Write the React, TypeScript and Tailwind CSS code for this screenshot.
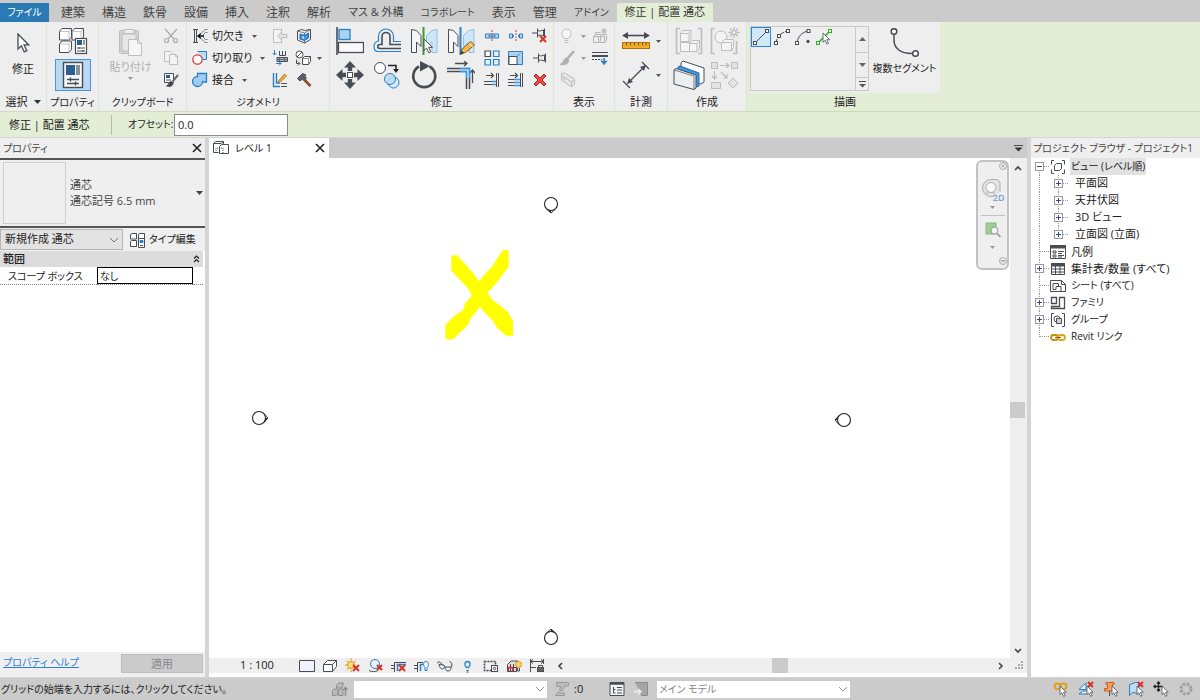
import type { ReactNode } from 'react'

const INK = '#474c55'
const BLUE = '#2b7fc4'
const PALE = '#bcdcf3'
const OFF = '#bdbdbd'
const RED = '#d8322a'

type IconProps = { w?: number; h?: number; color?: string; sw?: number; children: ReactNode }

function Icon({ w = 16, h = w, color = INK, sw = 1, children }: IconProps) {
  return (
    <svg
      width={w}
      height={h}
      viewBox={`0 0 ${w} ${h}`}
      fill="none"
      stroke={color}
      strokeWidth={sw}
      className="shrink-0"
      aria-hidden="true"
    >
      {children}
    </svg>
  )
}

/* ── Shared glyphs ── */

function Caret({ color = '#555' }: { color?: string }) {
  return (
    <svg width="5" height="3" viewBox="0 0 5 3" className="shrink-0" aria-hidden="true">
      <path d="M0 0h5L2.5 3z" fill={color} />
    </svg>
  )
}

const Pointer = ({ x, y, k = 1 }: { x: number; y: number; k?: number }) => (
  <path
    transform={`translate(${x} ${y}) scale(${k})`}
    d="M0 0v11.5l2.6-2.4 2.2 4.7 2-1-2.1-4.4h3.6z"
    fill="#fff"
    stroke={INK}
    strokeWidth="1"
  />
)

const Cross = ({ x, y, s = 6 }: { x: number; y: number; s?: number }) => (
  <path d={`M${x} ${y}l${s} ${s}m0 ${-s}l${-s} ${s}`} stroke={RED} strokeWidth="2" />
)

const Close = () => (
  <Icon w={10} color="#222" sw={1.6}><path d="M1 1l8 8M9 1l-8 8" /></Icon>
)

const Chevron = ({ d = 'M1 1l4 4 4-4', color = '#777', w = 10, h = 6, sw = 1 }) => (
  <Icon w={w} h={h} color={color} sw={sw}><path d={d} /></Icon>
)

/* ── Ribbon icons ── */

const ModifyCursor = () => <Icon w={14} h={20}><Pointer x={2} y={1} k={1.3} /></Icon>

const TypeProps = () => (
  <Icon w={30} h={28}>
    <g fill="#fff">
      <path d="M1.5 4.5l2.5-3h9.500v8.500l-2.500 3h-9.500zM14 4.500l2.500-3h9v8.500l-2.500 3H14zM1.5 17l2.500-3h9.500v8.500l-2.500 3h-9.500z" />
      <path d="M1.500 4.500H11V13M14 4.500h9V13M11 4.500l2.500-3M23 4.500l2.500-3M1.500 17H11v8.500M11 17l2.500-3" stroke="#9a9ea5" strokeWidth=".6" />
      <rect x="17.5" y="11.5" width="11" height="15" strokeWidth="1.2" />
    </g>
    <path d="M19 13h5v5h-5z" fill="#2a5f96" stroke="none" />
    <path d="M25 13h2v5h-2z" fill="#999" stroke="none" />
    <path d="M19 21h8M19 24h8M21 20v2M25 23v2" />
  </Icon>
)

const PropSheet = () => (
  <Icon w={22} h={28}>
    <rect x="1.5" y="1.5" width="19" height="25" fill="#f6f7f8" strokeWidth="1.4" />
    <path d="M4 4h9v10H4z" fill="#2a5f96" stroke="none" />
    <path d="M14 4h4v10h-4z" fill="#8b9098" stroke="none" />
    <path d="M5 18.5h12M5 22.5h12M8.5 16.5v4M13.5 20.5v4" strokeWidth="1.4" />
  </Icon>
)

const Paste = () => (
  <Icon w={26} h={30} color={OFF}>
    <rect x="1.5" y="3.5" width="19" height="23" rx="1" fill="#d2d2d2" />
    <path d="M6 2.5h10v4H6z" fill="#eee" />
    <path d="M4 7h14v17H4z" fill="#e6e6e6" />
    <path d="M10.5 12.5h9l4 4v12h-13z" fill="#f6f6f6" />
    <path d="M19.5 12.5v4h4" />
  </Icon>
)

const Cut = () => (
  <Icon color="#aaa" sw={1.2}>
    <path d="M2 1l9 10M14 1L5 11" />
    <circle cx="3.5" cy="12.5" r="2" /><circle cx="12.5" cy="12.5" r="2" />
  </Icon>
)

const Copy = () => (
  <Icon color={OFF}>
    <path d="M1.5 1.5h6l2 2v8h-8z" fill="#f4f4f4" />
    <path d="M6.5 4.5h6l2 2v8h-8z" fill="#f4f4f4" />
    <path d="M12.5 4.5v2h2" />
  </Icon>
)

const MatchType = () => (
  <Icon>
    <path d="M1.5 1.5h9v9h-9z" fill="#fff" />
    <path d="M3 3h4v3H3z" fill="#2a5f96" stroke="none" />
    <path d="M3 8h5" />
    <path d="M15 3L9.5 9.5" stroke="#6b6b6b" strokeWidth="2" />
    <path d="M8.5 9.5c-3 0-2 3-5 4.5 3 1 6.5 0 6.5-2.5z" fill="#444" />
  </Icon>
)

const Cope = () => (
  <Icon>
    <path d="M1 1.5h5M1 14.5h5M2.5 2v12M4.5 2v12" />
    <path d="M15.5 1.5H13L9.5 5M15.5 14.5H13L9.5 11M15.5 4.5h-2L11.5 6.5v3l2 2h2" stroke="#747982" />
    <path d="M12 8H6.5M9 5.5L6 8l3 2.5" stroke="#111" strokeWidth="1.4" />
  </Icon>
)

const CutGeom = () => (
  <Icon>
    <path d="M5.5 1.5h9v8h-4" fill={PALE} stroke={BLUE} />
    <circle cx="5.5" cy="9.5" r="4.7" fill="#fff" stroke={RED} strokeWidth="1.2" />
  </Icon>
)

const JoinGeom = () => (
  <Icon color={BLUE}>
    <path d="M5.5 1.5h9V10H10.500a5 5 0 1 1-5-5.500z" fill="#9fcdef" strokeWidth="1.3" />
  </Icon>
)

const SplitFace = () => (
  <Icon color={OFF}>
    <path d="M9.5 4V1.5h-8v13h8V12" fill="#f4f4f4" />
    <path d="M15 6.5H9.5V4L5.5 8l4 4V9.5H15z" fill="#e4e4e4" />
  </Icon>
)

const PaintCube = () => (
  <Icon>
    <path d="M1.5 3l4-1.5 3 1 6-1v10l-6 3.5-7-3z" fill="#eef1f4" />
    <path d="M8.5 5v10M1.5 3l7 2 6-3.500" strokeWidth=".7" />
    <path d="M4 6l4.500 1.500L12.500 5v5L8.500 12.500 4 11z" fill="#3f94d6" stroke="#1d6bb0" />
    <path d="M6 8.500h2v2H6z" fill="#cfe6f7" stroke="none" />
  </Icon>
)

const BeamJoin = () => (
  <Icon>
    <path d="M2.5 0v5M.5 3l2 2 2-2M9 13.5H4M7 11.5l2 2-2 2" stroke={BLUE} />
    <path d="M7.5 1v4.5h6V1M10.5 1v4" />
    <path d="M5 7.5h10.5v4H5z" fill="#aeb3ba" />
    <path d="M5 9.5h10M7.5 8v3M12.5 8v3" strokeWidth=".7" />
  </Icon>
)

const WallJoin = () => (
  <Icon>
    <circle cx="4.5" cy="4.5" r="3.5" fill="#fff" /><path d="M2 7l5-5" />
    <path d="M1.5 9.5v4h3M3 11.5l2 2-2 2" />
    <path d="M7.5 8.5l2-2h6v5l-2 3h-6z" fill="#fff" /><path d="M7.5 8.5h6v6M13.5 8.5l2-2" strokeWidth=".6" />
  </Icon>
)

const Unjoin = () => (
  <Icon>
    <path d="M1.5 1v13.5H8M4.5 1v10H8" stroke={BLUE} strokeWidth="1.4" />
    <path d="M9 11.5h6M9 14.5h6" />
    <path d="M6 9.5L12.5 2l2 2L8 10.5z" fill="#f0b13c" stroke="#a5691b" strokeWidth=".8" />
  </Icon>
)

const Hammer = () => (
  <Icon>
    <path d="M7 6.5l7.5 7.5" stroke="#8a4b33" strokeWidth="2.6" />
    <path d="M1.5 6.5l5-5 3.5 1.5-1 1.5 1.5 1.5-2 2-1.5-1.5L4 9z" fill="#5a6069" />
  </Icon>
)

const Align = () => (
  <Icon w={28} h={28}>
    <path d="M1 0v28" strokeWidth="1.6" />
    <rect x="3" y="2.5" width="11" height="10" fill="#a9d3f0" stroke={BLUE} strokeWidth="1.3" />
    <rect x="2.5" y="15.5" width="25" height="10" fill="#fafafa" strokeWidth="1.3" />
  </Icon>
)

const Offset = () => (
  <Icon w={28} h={26}>
    <path d="M28 13.5h-7.5v-5a7.500 7.500 0 0 0-15 0v4.500C2 13.5 1 15 1 18.5s1 5 4 5h23" fill="#e4f1fa" stroke={BLUE} strokeWidth="1.2" />
    <path d="M28 16.5H17v-8a4 4 0 0 0-8 0v8H7c-3 0-3 4 0 4h21" fill="#eee" strokeWidth="1.6" />
  </Icon>
)

const MirrorHalf = ({ blue = false }) => (
  <path
    d={blue ? 'M16.5 8.5L22 3.5l5-1v23h-5V15l-5.5 4.5z' : 'M1.5 2.5l5 1 4.5 5v11L6.5 15v10.5h-5z'}
    fill={blue ? '#cfe6f6' : '#f6f6f6'}
    stroke={blue ? '#8dbfe4' : INK}
  />
)

const MirrorPick = () => (
  <Icon w={28} h={28}>
    <MirrorHalf /><MirrorHalf blue />
    <path d="M13.5 0v28" stroke="#3e9a35" strokeWidth="2" />
    <Pointer x={14} y={12} />
  </Icon>
)

const MirrorDraw = () => (
  <Icon w={28} h={28}>
    <MirrorHalf /><MirrorHalf blue />
    <path d="M13.5 0v28" stroke={BLUE} strokeWidth="2" />
    <path d="M13.5 27l1.5-5 9-7.5 3.5 3.5-9 7.5z" fill="#f3bb45" stroke="#8a5a20" />
    <path d="M22 16l3.5 3.5" stroke="#fff" /><path d="M13.5 27l1-3 2 2z" fill="#222" />
  </Icon>
)

const Move = () => (
  <Icon w={28} h={28}>
    <path
      d="M14 0l6 6.5h-3.8V10h-4.4V6.5H8zM14 28l-6-6.5h3.8V18h4.4v3.5H20zM0 14l6.5-6v3.8H10v4.4H6.5V20zM28 14l-6.5 6v-3.8H18v-4.4h3.5V8z"
      fill={INK}
      stroke="none"
    />
    <rect x="11.5" y="11.5" width="5" height="5" fill="#fff" />
  </Icon>
)

const CopyObj = () => (
  <Icon w={28} h={28}>
    <circle cx="7" cy="7" r="5.5" fill="#fff" />
    <path d="M15 4.5h8v5" stroke="#222" strokeWidth="1.5" /><path d="M20 8h6l-3 4z" fill="#222" stroke="none" />
    <circle cx="20.5" cy="21.5" r="5.5" fill="#d8ebf8" stroke={BLUE} />
    <circle cx="17" cy="18" r="5.5" fill={PALE} fillOpacity=".8" stroke={BLUE} />
  </Icon>
)

const Rotate = () => (
  <Icon w={28} h={28}>
    <path d="M9 5.5a11 11 0 1 0 10.5 0" strokeWidth="2.6" />
    <path d="M10 0l10 5-10 5.5z" fill={INK} stroke="none" />
  </Icon>
)

const TrimCorner = () => (
  <Icon w={28} h={28}>
    <path d="M8 2.5h12M17 0l3 2.5L17 5M25.5 22V9M23 12l2.5-3 2.5 3" strokeWidth="1.3" />
    <path d="M0 7.5h13M0 10.5h13M19.5 17v11M22.5 17v11" strokeWidth="1.5" />
    <path d="M13 7.5h9.5V17M13 10.5h6.5V17" stroke="#3f97e0" strokeWidth="1.8" />
  </Icon>
)

const Split = ({ gap = false }) => (
  <Icon>
    <path d={gap ? 'M1.5 6h3v4h-3zM11.5 6h3v4h-3z' : 'M1.5 6h13v4h-13z'} fill={PALE} stroke={BLUE} />
    <path d="M8 2v12" stroke={RED} strokeDasharray="2 1" />
    <path d="M5 8h6" stroke={gap ? '#eee' : BLUE} />
    <path d="M4 8l2-1.5v3zM12 8l-2-1.5v3z" fill={BLUE} stroke="none" />
  </Icon>
)

const Pin = () => (
  <path d="M1 8h5M6.5 3.5v9M6.5 5.5c3 1 3.5 0 6-.5v6c-2.5-.5-3-1.5-6-.5M13.5 3.5v9" />
)

const Unpin = () => <Icon><g transform="translate(-1 -3)"><Pin /></g><Cross x={8} y={8} /></Icon>

const ArrayGrid = () => (
  <Icon sw={1.2}>
    <path d="M1 1h5.5v5.5H1z" fill="#fff" />
    <path d="M9.5 1H15v5.5H9.5zM9.5 9.5H15V15H9.5zM1 9.5h5.5V15H1z" fill="#e4f1fb" stroke={BLUE} />
  </Icon>
)

const Scale = () => (
  <Icon>
    <path d="M.5 1.5h14v13H.5z" fill="#a9d3f0" stroke={BLUE} />
    <path d="M1 6.5h8v8H1z" fill="#fff" />
    <path d="M9 6.5l3-3" stroke={BLUE} />
  </Icon>
)

const Extend = ({ multi = false }) => (
  <Icon>
    <path d="M2 3.5h7M7 1l2.5 2.5L7 6" strokeWidth="1.2" />
    <path d={multi ? 'M0 7.5h6M0 10.5h6M0 13.5h6' : 'M0 9.5h8M0 12.5h8'} />
    <path d={multi ? 'M6 7.5h6M6 10.5h6M6 13.5h6' : 'M8 9.5h4M8 12.5h4'} stroke="#3f97e0" strokeWidth="1.4" />
    <path d="M12.5 1v14M14.5 1v14" />
  </Icon>
)

const Delete = () => (
  <Icon>
    <path d="M2 4l2-2 4 4 4-4 2 2-4 4 4 4-2 2-4-4-4 4-2-2 4-4z" fill="#ea4b43" stroke="#b3231e" />
  </Icon>
)

const Bulb = () => (
  <Icon color={OFF}>
    <path d="M5.5 10.5C4 8.5 3 7.5 3 5.5a4.5 4.5 0 0 1 9 0c0 2-1 3-2.5 5zM5.5 12.5h4M6 14.5h3" fill="#f6f6f6" />
  </Icon>
)

const DispBoxes = () => (
  <Icon color="#b4b4b4">
    <path d="M1.5 8.5l2-2h5v6l-1.5 2H1.5zM7.5 8.5l2-2h5v6l-1.5 2H7.5M3.5 6V4.5h5" fill="#eee" />
    <path d="M1.5 8.5h5v5M7.5 8.5h5v5" />
    <path d="M12 0v6M9 3h6M10 1l4 4M14 1l-4 4" />
  </Icon>
)

const Brush = () => (
  <Icon color="#b0b0b0">
    <path d="M15 1L8.5 8.5" strokeWidth="2.6" />
    <path d="M8 8c-4 0-2 4-7 6.5 5 .5 9 0 8.5-5z" fill="#b0b0b0" />
  </Icon>
)

const LineWork = () => (
  <Icon>
    <path d="M0 2.5h16" /><path d="M0 6h16" strokeWidth="2" /><path d="M0 9.5h10" strokeDasharray="2 1" />
    <path d="M12 8v6M10 11.5l2 2.5 2-2.5z" stroke={BLUE} fill={BLUE} strokeWidth="1.6" />
  </Icon>
)

const Beam = () => (
  <Icon color={OFF}>
    <path d="M1.5 1.5l3-.5 10 6v5l-3 3-10-7z" fill="#e6e6e6" /><path d="M1.5 3.5l10 6.5v4M11.5 10l3-2.5M4 8V5" />
  </Icon>
)

const Measure = () => (
  <Icon w={28} h={20}>
    <path d="M3 4.5h22" strokeWidth="1.6" />
    <path d="M0 4.5L6 1v7zM28 4.5L22 1v7z" fill={INK} stroke="none" />
    <rect x=".5" y="11.5" width="27" height="6" fill="#f2ae24" stroke="#a97414" />
    <path d="M4.5 12v2.5M8.5 12v2.5M12.5 12v2.5M16.5 12v2.5M20.5 12v2.5M24 12v2.5" stroke="#7b5210" />
  </Icon>
)

const Dimension = () => (
  <Icon w={28} h={28} sw={1.3}>
    <path d="M6 22L23 5M20 1l7 7M1 20l7 7" />
    <path d="M24 4l-2 6-4-4zM5 23l2-6 4 4z" fill={INK} stroke="none" />
  </Icon>
)

const CreateGroup = () => (
  <Icon w={28} h={28} color={OFF}>
    <path d="M5 1.5H1.5v25H5M23 1.5h3.5v25H23" strokeWidth="1.6" />
    <path d="M5.5 6.5L8 3.5h8V12l-2 2.5H5.5zM5.5 15.5h9v9h-9zM14.5 16.5l2.5-3h7.5v8l-2.5 3h-7.5z" fill="#f4f4f4" />
    <path d="M5.5 6.5H14v8M16 3.5l-2 3M14.5 16.5H22v8M24.5 13.5l-2.5 3" />
  </Icon>
)

const CreateSimilar = () => (
  <Icon w={30} h={28} color={OFF}>
    <path d="M5 1.5H1.5v25H5M23 26.5h3.5V14" strokeWidth="1.6" />
    <circle cx="11" cy="10" r="6" fill="#f4f4f4" />
    <path d="M11.5 15.5l3-3h9v8l-2 3h-10zM11.5 15.5h10v8" fill="#f4f4f4" />
    <path d="M24 0v11M18.5 5.5h11M20 1.5l8 8M28 1.5l-8 8" strokeWidth="1.3" />
    <circle cx="24" cy="5.5" r="2" fill="#eee" />
  </Icon>
)

const Assembly = () => (
  <Icon w={32} h={30}>
    <path d="M8 3l2-2 21 7v14l-3 2L8 17z" fill="#fff" />
    <path d="M5 7l2-1 19 7v13l-3 1L5 20z" fill="#3f97e0" stroke="#1e6eb4" />
    <path d="M1 10l2-1.5 20 6.5v13l-2 1.5L1 24z" fill="#eceef0" />
    <path d="M1 10l20 6v13" strokeWidth=".7" />
  </Icon>
)

const Parts = () => (
  <Icon w={30} h={28} color={OFF}>
    <path d="M1.5 1.5h6v6h-6zM21.5 1.5h6v6h-6zM1.5 21.5h9v6h-9zM18 22l5-5 5 5-5 5z" fill="#e3e3e3" />
    <path d="M10 4.5h9M16 2l3 2.5L16 7M4.5 10v8M2 15l2.5 3L7 15M11 11l6 6M17 13v4h-4" strokeWidth="1.2" />
  </Icon>
)

const dot = (x: number, y: number, c = INK) => (
  <rect x={x - 1.5} y={y - 1.5} width="3" height="3" fill="#fff" stroke={c} />
)

const DrawLine = () => <Icon><path d="M2 14L14 2" />{dot(2, 14)}{dot(14, 2)}</Icon>
const DrawArc = () => (
  <Icon><path d="M2 14c.5-5.500 5-11 12-12" strokeDasharray="4 1" />{dot(2, 14)}{dot(5, 7)}{dot(14, 2)}</Icon>
)
const DrawCenterArc = () => (
  <Icon><path d="M2 14c.5-6 5-11 11-12" />{dot(2, 14)}{dot(13.5, 2)}<circle cx="13" cy="12.5" r="1.2" fill={INK} /></Icon>
)
const DrawPick = () => (
  <Icon><path d="M2 14L14 2" stroke="#25b81f" strokeWidth="1.6" />{dot(2, 14, '#25b81f')}{dot(14, 2, '#25b81f')}<Pointer x={7} y={4} k={0.8} /></Icon>
)

const MultiSegment = () => (
  <Icon w={30} h={30} sw={1.5}>
    <path d="M4 6v6c0 8 6 13.5 18 13.5" />
    <circle cx="4" cy="3.5" r="2.8" fill="#fff" /><circle cx="25.5" cy="25.5" r="2.8" fill="#fff" />
  </Icon>
)

/* ── Ribbon ── */

const TABS = ['建築', '構造', '鉄骨', '設備', '挿入', '注釈', '解析', 'マス & 外構', 'コラボレート', '表示', '管理', 'アドイン']

const isWide = (text: string) => /^([\u30a0-\u30ff]{3}|Revit)/.test(text)

const tabSize = (text: string) => {
  if (isWide(text)) return 'text-[10px]'
  return text.includes('&') ? 'text-[11px]' : 'text-[12px]'
}

function Panel({ title, width, children, menu }: { title: string; width: string; children: ReactNode; menu?: boolean }) {
  return (
    <section className={`${width} flex shrink-0 flex-col border-r border-[#dbe8c9] bg-[#eeeeee]`}>
      <div className="flex h-[71px] items-start justify-center pt-[3px]">{children}</div>
      <h2 className={`flex h-[18px] items-center justify-center gap-1.5 whitespace-nowrap ${isWide(title) ? 'text-[10px]' : 'text-[11px]'}`}>
        {title}
        {menu && <svg width="7" height="4" viewBox="0 0 7 4" aria-hidden="true"><path d="M0 0h7L3.5 4z" fill="#333" /></svg>}
      </h2>
    </section>
  )
}

function Tool({ label, children, className = 'h-[22px] w-6' }: { label: string; children: ReactNode; className?: string }) {
  return (
    <button type="button" aria-label={label} className={`${className} flex shrink-0 items-center justify-center gap-1.5`}>
      {children}
    </button>
  )
}

function TextTool({ icon, text }: { icon: ReactNode; text: string }) {
  return (
    <button type="button" className="flex h-[22px] items-center gap-1 whitespace-nowrap text-[11px]">
      {icon}
      <span>{text}</span>
      <span className="pl-1"><Caret /></span>
    </button>
  )
}

function Ribbon() {
  return (
    <header>
      <nav className="flex h-[22px] items-end bg-[#cbcbcb]">
        <button type="button" className="h-[19px] w-[49px] shrink-0 bg-[#2a7ab5] text-[10px] text-white">ファイル</button>
        <div className="flex h-[19px] shrink-0 items-center gap-[17px] pl-3">
          {TABS.map(tab => (
            <button key={tab} type="button" className={`whitespace-nowrap text-[#444] ${tabSize(tab)}`}>{tab}</button>
          ))}
        </div>
        <button type="button" className="ml-2 h-[19px] w-24 shrink-0 whitespace-nowrap bg-[#e4eed6] text-[11px] text-[#333]">
          修正 | 配置 通芯
        </button>
      </nav>

      <div className="flex h-[90px] overflow-hidden border-b border-[#cfdcbc] bg-[#e4eed6]">
        <Panel title="選択" width="w-[47px]" menu>
          <button type="button" className="flex flex-col items-center gap-2 pt-2 text-[11px] leading-4">
            <ModifyCursor />
            修正
          </button>
        </Panel>

        <Panel title="プロパティ" width="w-[52px]">
          <div className="flex flex-col items-center">
            <Tool label="タイプ プロパティ" className="h-8 w-9"><TypeProps /></Tool>
            <Tool label="プロパティ" className="mt-0.5 h-8 w-9 border border-[#4a93d6] bg-[#b9d8f2]"><PropSheet /></Tool>
          </div>
        </Panel>

        <Panel title="クリップボード" width="w-[88px]">
          <button type="button" disabled className="flex w-14 flex-col items-center whitespace-nowrap pt-0.5 text-[11px] leading-5 text-[#b0b0b0]">
            <Paste />
            <span>貼り付け</span>
            <Caret color="#999" />
          </button>
          <div className="flex flex-col">
            <Tool label="切り取り"><Cut /></Tool>
            <Tool label="コピー"><Copy /></Tool>
            <Tool label="タイプの一致"><MatchType /></Tool>
          </div>
        </Panel>

        <Panel title="ジオメトリ" width="w-[143px]">
          <div className="flex w-[76px] flex-col items-start">
            <TextTool icon={<Cope />} text="切欠き" />
            <TextTool icon={<CutGeom />} text="切り取り" />
            <TextTool icon={<JoinGeom />} text="接合" />
          </div>
          <div className="flex flex-col">
            <Tool label="面を分割"><SplitFace /></Tool>
            <Tool label="梁結合"><BeamJoin /></Tool>
            <Tool label="結合解除"><Unjoin /></Tool>
          </div>
          <div className="flex flex-col items-start">
            <Tool label="ペイント"><PaintCube /></Tool>
            <Tool label="壁結合" className="h-[22px] w-8"><WallJoin /><Caret /></Tool>
            <Tool label="取り壊し"><Hammer /></Tool>
          </div>
        </Panel>

        <Panel title="修正" width="w-[224px]">
          <div className="grid grid-cols-[repeat(4,37px)] grid-rows-[34px_34px] justify-items-center">
            <Tool label="位置合わせ" className="size-8"><Align /></Tool>
            <Tool label="オフセット" className="size-8"><Offset /></Tool>
            <Tool label="鏡像化 - 軸を選択" className="size-8"><MirrorPick /></Tool>
            <Tool label="鏡像化 - 軸を描画" className="size-8"><MirrorDraw /></Tool>
            <Tool label="移動" className="size-8"><Move /></Tool>
            <Tool label="複写" className="size-8"><CopyObj /></Tool>
            <Tool label="回転" className="size-8"><Rotate /></Tool>
            <Tool label="コーナーへトリム" className="size-8"><TrimCorner /></Tool>
          </div>
          <div className="grid grid-cols-3">
            <Tool label="要素を分割"><Split /></Tool>
            <Tool label="隙間で分割"><Split gap /></Tool>
            <Tool label="ピン解除"><Unpin /></Tool>
            <Tool label="配列複写"><ArrayGrid /></Tool>
            <Tool label="尺度変更"><Scale /></Tool>
            <Tool label="ピン"><Icon><Pin /></Icon></Tool>
            <Tool label="単一トリム"><Extend /></Tool>
            <Tool label="複数トリム"><Extend multi /></Tool>
            <Tool label="削除"><Delete /></Tool>
          </div>
        </Panel>

        <Panel title="表示" width="w-[61px]">
          <div className="flex flex-col">
            <Tool label="非表示" className="h-[22px] w-8"><Bulb /><Caret color="#999" /></Tool>
            <Tool label="グラフィックスを上書き" className="h-[22px] w-8"><Brush /><Caret color="#999" /></Tool>
            <Tool label="切断面"><Beam /></Tool>
          </div>
          <div className="flex flex-col">
            <Tool label="要素を置換"><DispBoxes /></Tool>
            <Tool label="ラインワーク"><LineWork /></Tool>
          </div>
        </Panel>

        <Panel title="計測" width="w-[53px]">
          <div className="flex flex-col">
            <Tool label="計測" className="h-8 w-11"><Measure /><Caret /></Tool>
            <Tool label="寸法" className="h-9 w-11"><Dimension /><Caret /></Tool>
          </div>
        </Panel>

        <Panel title="作成" width="w-[79px]">
          <div className="grid grid-cols-2 grid-rows-[34px_34px]">
            <Tool label="グループを作成" className="h-8 w-9"><CreateGroup /></Tool>
            <Tool label="類似を作成" className="h-8 w-9"><CreateSimilar /></Tool>
            <Tool label="アセンブリを作成" className="h-8 w-9"><Assembly /></Tool>
            <Tool label="パーツを作成" className="h-8 w-9"><Parts /></Tool>
          </div>
        </Panel>

        <section className="ml-[3px] flex w-[190px] shrink-0 flex-col">
          <div className="flex h-[71px] items-start bg-[#eeeeee] pt-1">
            <div className="flex h-[65px] w-[119px] border border-[#c9c9c9]">
              <div className="flex flex-1 items-start">
                <Tool label="線分" className="size-5 border border-[#2b86d8] bg-[#cfe8fa]"><DrawLine /></Tool>
                <Tool label="始点、終点、円弧" className="h-5 w-[21px]"><DrawArc /></Tool>
                <Tool label="中心、両端指定による円弧" className="h-5 w-[21px]"><DrawCenterArc /></Tool>
                <Tool label="選択" className="h-5 w-[21px]"><DrawPick /></Tool>
              </div>
              <div className="flex w-[13px] flex-col divide-y divide-[#c9c9c9] border-l border-[#c9c9c9]">
                <button type="button" aria-label="上へ" className="flex flex-1 items-center justify-center"><Icon w={7} h={4}><path d="M0 4h7L3.5 0z" fill="#666" stroke="none" /></Icon></button>
                <button type="button" aria-label="下へ" className="flex flex-1 items-center justify-center"><Icon w={7} h={4}><path d="M0 0h7L3.5 4z" fill="#666" stroke="none" /></Icon></button>
                <button type="button" aria-label="展開" className="flex h-3 items-center justify-center"><Icon w={7} h={7}><path d="M0 .5h7" /><path d="M0 3h7L3.5 6.5z" fill="#555" stroke="none" /></Icon></button>
              </div>
            </div>
            <button type="button" className="flex flex-1 flex-col items-center gap-0.5 whitespace-nowrap pt-0.5 text-[10px] leading-4">
              <MultiSegment />
              複数セグメント
            </button>
          </div>
          <h2 className="flex h-[18px] items-center justify-center text-[11px]">描画</h2>
        </section>
      </div>

      <div className="flex h-[25px] items-center bg-[#e4eed6]">
        <span className="w-[112px] shrink-0 whitespace-nowrap border-r border-[#b5bda9] pl-[9px] text-[11px] leading-5">修正 | 配置 通芯</span>
        <label htmlFor="offset" className="w-[62px] pl-4 text-[10px]">オフセット:</label>
        <input id="offset" defaultValue="0.0" className="h-[22px] w-[114px] border border-[#8b8b8b] bg-white px-[3px] text-[11px]" />
      </div>
    </header>
  )
}

/* ── Properties palette ── */

function PropertiesPalette() {
  return (
    <aside className="flex w-[205px] shrink-0 flex-col bg-[#efefef]">
      <div className="flex h-5 items-center justify-between px-[3px]">
        <h2 className="text-[10px] text-[#444]">プロパティ</h2>
        <button type="button" aria-label="閉じる"><Close /></button>
      </div>
      <button type="button" className="flex h-[70px] items-center border-y-2 border-[#555] pl-[3px] pr-0.5 text-left text-[#444]">
        <span className="h-[62px] w-[63px] border border-[#cfcfcf]" />
        <span className="flex-1 pl-1 text-[11px] leading-4">通芯<br />通芯記号 6.5 mm</span>
        <Icon w={7} h={4}><path d="M0 0h7L3.5 4z" fill="#444" stroke="none" /></Icon>
      </button>
      <div className="flex h-[23px] items-center">
        <div className="grid w-[123px] items-center">
          <select aria-label="要素フィルタ" className="col-start-1 row-start-1 h-[21px] appearance-none border border-[#b5b5b5] bg-[#e3e3e3] pl-1 text-[11px]">
            <option>新規作成 通芯</option>
          </select>
          <span className="pointer-events-none col-start-1 row-start-1 justify-self-end pr-1"><Chevron /></span>
        </div>
        <button type="button" className="flex items-center gap-1 whitespace-nowrap pl-1.5 text-[10px]">
          <Icon>
            <path d="M1.5 3l1-1.5h5V7h-6zM9.5 3l1-1.5h5V7h-6zM1.5 9.5l1-1h5v6h-6z" fill="#fff" />
            <path d="M9.5 6.5h6v9h-6z" fill="#fff" /><path d="M11 8.5h3v2h-3z" fill={BLUE} stroke={BLUE} /><path d="M11 13.5h3" />
          </Icon>
          タイプ編集
        </button>
      </div>
      <div className="flex-1 bg-white pr-0.5">
        <table className="w-full table-fixed border-collapse text-[10px] leading-4">
          <colgroup><col className="w-[97px]" /><col /><col className="w-2.5" /></colgroup>
          <tbody>
            <tr className="h-4 bg-[#dcdcdc]">
              <th colSpan={2} className="p-0 pl-[3px] text-left text-[11px] font-medium">範囲</th>
              <td className="p-0"><Icon w={7} h={8} color="#222" sw={1.2}><path d="M1 3.5L3.5 1 6 3.5M1 7l2.5-2.5L6 7" /></Icon></td>
            </tr>
            <tr className="h-[17px] border-b border-dotted border-[#888]">
              <td className="p-0 pl-2"><label htmlFor="scope">スコープ ボックス</label></td>
              <td className="p-0">
                <input id="scope" defaultValue="なし" className="block h-[17px] w-full border border-black bg-white px-0.5" />
              </td>
              <td className="p-0" />
            </tr>
          </tbody>
        </table>
      </div>
      <div className="flex h-[25px] items-start justify-between pl-[3px] pr-0.5 pt-0.5">
        <a href="#help" className="text-[10px] leading-4 text-[#2f7fd6] underline">プロパティ ヘルプ</a>
        <button type="button" disabled className="h-[19px] w-[82px] border border-[#bdbdbd] bg-[#cbcbcb] text-[11px] leading-4 text-[#888]">適用</button>
      </div>
    </aside>
  )
}

/* ── Drawing view ── */

function ElevationMark({ x, y, turn }: { x: number; y: number; turn: number }) {
  return (
    <g transform={`translate(${x} ${y}) rotate(${turn})`} stroke="#222" fill="none">
      <path d="M-4.5 5L0 9l4.5-4" fill="#fff" strokeWidth=".9" />
      <path d="M-4.5 5L0 9V6z" fill="#222" stroke="none" />
      <circle r="6.5" fill="#fff" strokeWidth="1.1" />
    </g>
  )
}

const VIEW_TOOLS: { name: string; art: ReactNode }[] = [
  { name: '詳細レベル', art: <path d="M.5 2.5h15v11H.5z" fill="#f0f4fa" /> },
  { name: '表示スタイル', art: <path d="M1.5 6.5l4-4h9v6l-4 5h-9zM1.5 6.5h9v7M10.5 6.5l4-4" fill="#fff" /> },
  { name: '太陽', art: <><circle cx="6" cy="7" r="3.5" fill="#ffdf6b" stroke="#d9940f" /><path d="M6 0v2.5M0 7h2M1.5 2.5l2 2M1.5 12l2-2M6 12v2M10.5 2.5L9 4.5" stroke="#d9940f" /><Cross x={8} y={7} /></> },
  { name: '影', art: <><circle cx="7" cy="6" r="4.5" fill="#e4f2fc" stroke={BLUE} /><path d="M1 12.5c3 1.5 6 1.5 9 0" /><Cross x={9} y={7} s={5} /></> },
  { name: 'トリミング', art: <><path d="M3.5 14V4.5H15M0 7.5h4M0 10.5h4" /><path d="M6.5 13V6.5H15" stroke={BLUE} strokeWidth="1.5" /><Cross x={8} y={7} /></> },
  { name: 'トリミング領域', art: <><path d="M3.5 14V4.5H9M0 7.5h4M0 10.5h4" /><path d="M6.5 13V6.5H10" stroke={BLUE} strokeWidth="1.5" /><path d="M11 9.5c-2-2-2-6 1-6s3 4 1 6v3h-2z" fill="#fff" stroke={BLUE} /></> },
  { name: '一時的な非表示', art: <><path d="M1 5.5C0 3 3 3 5 6.5M14.5 9c1-3 0-5-2-5.5" /><path d="M2 6.5l5 .5c1 2 0 4-1.5 4S2 9 2 6.5zM8 9h6c.5 2-1 4-3 4S8 11 8 9z" fill="#e8f2fa" /></> },
  { name: '非表示要素', art: <><path d="M6.5 9.5c-2.5-2.5-2-6 1-6s3.5 3.5 1 6z" fill="#e4f2fc" stroke={BLUE} strokeWidth="1.3" /><path d="M6.5 12.5h2M6.5 14h2" /></> },
  { name: 'ビュー プロパティ', art: <><path d="M1.5 3.5h11v9h-11z" strokeDasharray="2 1" strokeWidth="1.6" /><rect x="8.5" y="7.5" width="6" height="6" fill="#fff" /><circle cx="11.5" cy="10.5" r="1.2" /></> },
  { name: '解析モデル', art: <><path d="M1.5 6.5L5 3h7l-1.5 3.5v7h-9zM4.5 6v7M7.5 6v7M1.5 9.5h10" fill="#ddd" /><path d="M2.5 13V9.5h4V13" stroke={RED} strokeWidth="1.3" /><circle cx="12.5" cy="6.5" r="3" fill="#ffd36b" stroke="#d9940f" /><path d="M11.5 10v3h2v-3" /></> },
  { name: '拘束', art: <><path d="M1.5 1v13M14.5 1v5M2 3.5h12M2 9.5h5" /><path d="M4 1.5l-2.5 2L4 5.5M12 1.5l2.5 2-2.5 2" /><rect x="8.5" y="9.5" width="6" height="4" fill="#666" /><path d="M9.5 9.5v-2h4v2" /></> },
]

function NavigationBar() {
  return (
    <div className="absolute right-px top-0.5 flex h-[110px] w-[33px] flex-col items-center rounded-md border-2 border-[#c2c2c2] bg-[#efefef]">
      <button type="button" aria-label="ナビゲーションを閉じる" className="self-end"><Icon w={8} color="#aaa"><circle cx="4" cy="4" r="3.5" /><path d="M2.5 2.5l3 3M5.5 2.5l-3 3" /></Icon></button>
      <button type="button" aria-label="2D ホイール" className="grid pt-2">
        <span className="col-start-1 row-start-1">
          <Icon w={24} h={24} color="#adadad">
            <path d="M19 14V5.5c0-2.5-2-4-4-4h-5a8.5 8.5 0 1 0 0 17h3" fill="#e4e4e4" />
            <circle cx="10" cy="9.5" r="5" fill="#f8f8f8" /><path d="M5 16l3-2.5M12 14l2 2.5" />
          </Icon>
        </span>
        <span className="col-start-1 row-start-1 self-end justify-self-end text-[9px] font-semibold leading-[9px] text-[#7b9fc6]">2D</span>
      </button>
      <span className="pb-1.5 pt-1"><Caret color="#999" /></span>
      <span className="w-6 border-t border-[#c2c2c2]" />
      <button type="button" aria-label="ズーム" className="pt-1.5"><Icon color="#999"><path d="M1 1h10v11H1z" fill="#a3cb95" stroke="#8ab57b" /><circle cx="9.5" cy="8.5" r="3.5" fill="#f2f6fa" /><path d="M12 11.5l3.5 3.5" strokeWidth="1.6" /></Icon></button>
      <span className="py-2"><Caret color="#999" /></span>
      <button type="button" aria-label="オプション" className="self-end"><Icon w={8} color="#aaa"><circle cx="4" cy="4" r="3.5" /><path d="M2 3.5h4l-2 2z" /></Icon></button>
    </div>
  )
}

function DrawingView() {
  return (
    <main className="flex min-w-0 flex-1 flex-col border-l-4 border-[#d4d4d4] bg-white">
      <div className="flex h-5 shrink-0 items-center justify-between bg-[#cbcbcb] pr-1">
        <div className="flex h-full w-[120px] items-center bg-white px-1">
          <Icon>
            <path d="M.5 3.5l2-2h8v3M.5 3.5v9h5M.5 3.5h8l2-2" fill="#fff" /><path d="M6.5 6.5l2-2h7v9h-9z" fill="#fff" /><path d="M3 13V8h7v5" strokeDasharray="1 1" />
          </Icon>
          <span className="flex-1 whitespace-nowrap pl-1.5 text-[10px]">レベル 1</span>
          <button type="button" aria-label="ビューを閉じる"><Close /></button>
        </div>
        <button type="button" aria-label="ビュー一覧"><Icon w={9} h={7}><path d="M0 .5h9" /><path d="M.5 2.5h8l-4 4z" fill="#333" stroke="none" /></Icon></button>
      </div>

      <div className="flex min-h-0 flex-1">
        <div className="relative flex-1">
          <svg className="absolute inset-0 h-full w-full" aria-label="平面図 レベル 1">
            <path
              transform="translate(221 32) scale(.3333)"
              d="M64 196H82L105 222 130 250 147 274 168 248 186 230 200 208 218 180H236V230L215 258 200 278 172 308 190 332 215 350 235 368 249 394V437H228L200 412 188 392 165 368 150 350 120 388 116 402 98 420 82 434 70 448H46V404L80 372 100 360 104 342 126 316 110 290 90 270 64 242z"
              fill="#ff0"
            />
            <ElevationMark x={342} y={46} turn={0} />
            <ElevationMark x={50} y={260} turn={-90} />
            <ElevationMark x={635} y={262} turn={90} />
            <ElevationMark x={342} y={480} turn={180} />
          </svg>
          <NavigationBar />
        </div>
        <div className="flex w-[15px] flex-col items-center bg-[#efefef] pb-1 pt-[7px]">
          <Chevron w={8} h={6} d="M1 5l3-3 3 3" color="#444" sw={1.6} />
          <span className="flex-1" />
          <span className="h-4 w-full bg-[#cbcbcb]" />
          <span className="flex-1" />
          <Chevron w={8} h={6} d="M1 1l3 3 3-3" color="#444" sw={1.6} />
        </div>
        <div className="w-0.5 bg-[#efefef]" />
      </div>

      <div className="mb-1 flex h-[15px] shrink-0 items-center bg-[#efefef] text-[11px]">
        <button type="button" className="whitespace-nowrap pl-[31px] pr-[25px]">1 : 100</button>
        <div className="flex items-center gap-[7px] pr-3">
          {VIEW_TOOLS.map(tool => (
            <button key={tool.name} type="button" aria-label={tool.name}><Icon>{tool.art}</Icon></button>
          ))}
        </div>
        <Chevron w={6} h={8} d="M5 1L2 4l3 3" color="#444" sw={1.6} />
        <span className="flex-1" />
        <span className="h-[15px] w-4 bg-[#cbcbcb]" />
        <span className="flex-1" />
        <Chevron w={6} h={8} d="M1 1l3 3-3 3" color="#444" sw={1.6} />
        <span className="pl-2.5 pr-1">
          <Icon w={9} h={9}><path d="M7 1h2M7 4h2M7 7h2M4 4h2M4 7h2M1 7h2" stroke="#aaa" strokeWidth="2" /></Icon>
        </span>
      </div>
    </main>
  )
}

/* ── Project browser ── */

type Branch = { name: string; open?: boolean; leaf?: boolean; art: ReactNode; children?: string[] }

const TREE: Branch[] = [
  { name: 'ビュー (レベル順)', open: true, art: <><path d="M4 1.5H1.5v4M12 1.5h2.5v4M4 14.5H1.5v-4M12 14.5h2.5v-4" /><path d="M4.5 6.5l2-2h5v5l-2 2h-5z" fill="#fff" /></>, children: ['平面図', '天井伏図', '3D ビュー', '立面図 (立面)'] },
  { name: '凡例', leaf: true, art: <><path d="M.5 1.5h15v13H.5z" fill="#fff" /><path d="M0 3h16" strokeWidth="3" /><path d="M3 7h3v2H3zM3 11h3v2H3zM8 7.5h6M8 9.5h4M8 11.5h6M8 13h4" /></> },
  { name: '集計表/数量 (すべて)', art: <><path d="M1.5 2.5h13v11h-13zM1.5 8h13M1.5 11h13M5.5 3v10M10 3v10" fill="#fff" /><path d="M1 4h14" strokeWidth="3" /></> },
  { name: 'シート (すべて)', leaf: true, art: <><path d="M.5 2.5h11l4 4v7H.5z" fill="#fff" /><path d="M11.5 2.5v4h4M3 11.5v-6h5.5v3M3 11.5h3v-3h5v5" /></> },
  { name: 'ファミリ', art: <path d="M1.5 2.5h5v6h-5zM9.5 2.5h5v11h-13v-2h8z" fill="#fff" strokeWidth="1.3" /> },
  { name: 'グループ', art: <><path d="M4 1.5H1.5v13H4M12 1.5h2.5v13H12" /><circle cx="7" cy="7" r="3" fill="#fff" /><path d="M6.5 6.5h5v5h-5z" fill="#cfd3d8" /></> },
  { name: 'Revit リンク', leaf: true, art: <><rect x="1" y="6" width="7" height="5" rx="2.5" stroke="#c98a08" strokeWidth="1.8" /><rect x="8" y="6" width="7" height="5" rx="2.5" stroke="#e0a614" strokeWidth="1.8" /><path d="M5 8.5h6" stroke="#8f6205" /></> },
]

function Joint({ open, leaf, first, last }: { open?: boolean; leaf?: boolean; first?: boolean; last?: boolean }) {
  return (
    <Icon w={16} h={17} color="#999">
      <path d={`M5.5 ${first ? 8 : 0}V${last ? 9 : 17}M6 8.5h10`} strokeDasharray="1 1" />
      {!leaf && (
        <>
          <rect x="1.5" y="4.5" width="8" height="8" fill="#fff" stroke="#999" />
          <path d={open ? 'M3 8.5h5' : 'M3 8.5h5M5.5 6v5'} stroke="#2b4f9c" />
        </>
      )}
    </Icon>
  )
}

function ProjectBrowser() {
  return (
    <aside className="flex w-[173px] shrink-0 flex-col border-l-4 border-[#d4d4d4] bg-white">
      <h2 className="h-5 whitespace-nowrap bg-[#efefef] pl-0.5 text-[10px] leading-5 text-[#444]">プロジェクト ブラウザ - プロジェクト1</h2>
      <ul className="pl-[3px] text-[11px]">
        {TREE.map((node, i) => (
          <li key={node.name}>
            <div className="flex h-[17px] items-center">
              <Joint open={node.open} leaf={node.leaf} first={i === 0} last={i === TREE.length - 1} />
              <Icon>{node.art}</Icon>
              <span className={`ml-1 whitespace-nowrap px-px leading-[17px] ${isWide(node.name) ? 'text-[10px]' : ''} ${node.open ? 'bg-[#e2e2e2]' : ''}`}>{node.name}</span>
            </div>
            {node.children && (
              <ul>
                {node.children.map((child, j) => (
                  <li key={child} className="flex h-[17px] items-center">
                    <Icon w={19} h={17} color="#999"><path d="M5.5 0v17" strokeDasharray="1 1" /></Icon>
                    <Joint last={j === node.children!.length - 1} />
                    <span className="whitespace-nowrap pl-1.5">{child}</span>
                  </li>
                ))}
              </ul>
            )}
          </li>
        ))}
      </ul>
    </aside>
  )
}

/* ── Status bar ── */

function StatusSelect({ label, value, width }: { label: string; value: string; width: string }) {
  return (
    <div className={`${width} grid items-center`}>
      <select aria-label={label} className="col-start-1 row-start-1 h-[17px] appearance-none bg-white pl-0.5 text-[10px] leading-4 text-[#888]">
        <option>{value}</option>
      </select>
      <span className="pointer-events-none col-start-1 row-start-1 justify-self-end pr-0.5"><Chevron color="#999" /></span>
    </div>
  )
}

function StatusBar() {
  return (
    <footer className="flex h-[22px] shrink-0 items-center bg-[#cbcbcb] text-[11px]">
      <p className="w-[332px] shrink-0 whitespace-nowrap pl-px text-[10px]">グリッドの始端を入力するには、クリックしてください。</p>
      <Icon color="#8f8f8f"><path d="M.5 9.5L2 8h4v5l-1.5 1.5h-4zM6.5 9.5L8 8h3v6.5H6.500zM4.500 4.500l2-2.500h5L10 7H4.500z" fill="#bbb" /><path d="M13.5 15V7M11.5 9l2-2.5 2 2.5" strokeWidth="1.5" /></Icon>
      <div className="flex items-center gap-[7px] pl-1.5">
        <StatusSelect label="ワークセット" value="" width="w-[193px]" />
        <Icon color="#999"><path d="M2.5 1.5h12v3l-4 1-2 4h-3l1.5-4H2.500zM4 11l-2.500 3.500h9V12H6z" fill="#bbb" /></Icon>
      </div>
      <span className="w-[39px] pl-1">:0</span>
      <div className="flex items-center gap-2">
        <button type="button" aria-label="設計オプション"><Icon><path d="M1 1.5h14v13H1z" fill="#f4f4f4" /><path d="M1 2.5h14" strokeWidth="2.5" /><path d="M4.5 6v6h2M4.5 8.5h2M8 6.5h5M8 9h5M8 12h5" /></Icon></button>
        <Icon color="#8b8b8b"><path d="M2 1.5h12.5v13H8" fill="#a5a5a5" /><path d="M1 10.5h6M5 8l3 2.5L5 13.5" stroke="#eee" strokeWidth="1.5" /></Icon>
        <StatusSelect label="アクティブな設計オプション" value="メイン モデル" width="w-[193px]" />
      </div>
      <div className="ml-auto flex items-center gap-[9px] pr-1.5">
        <button type="button" aria-label="リンクを選択"><Icon><path d="M1.5 5.5c0-4 6-4 6 0s-6 3-6 0zM7.5 5.5c0-4 6-4 6 0s-6 3-6 0z" stroke="#dfa21a" strokeWidth="2" /><Pointer x={7} y={5} k={0.75} /></Icon></button>
        <button type="button" aria-label="アンダーレイを選択"><Icon><path d="M1 8.5L8 2v6.5zM1 13l4-3h6l-3 3z" fill="#e7f2fa" stroke={BLUE} /><Cross x={10} y={1} s={5} /><Pointer x={9} y={5} k={0.75} /></Icon></button>
        <button type="button" aria-label="ピンを選択"><Icon><path d="M3 1.5h8v2H9.5v4H12V10H1.5V7.5h3v-4H3z" fill="#f2a066" stroke="#cf5c1b" /><path d="M6.5 10v5" /><Pointer x={9} y={5} k={0.75} /></Icon></button>
        <button type="button" aria-label="面で選択"><Icon><path d="M1.5 3.5l6-2h3v11l-6-1-3 3z" fill={PALE} stroke={BLUE} /><Cross x={10} y={1} s={5} /><Pointer x={9} y={5} k={0.75} /></Icon></button>
        <button type="button" aria-label="ドラッグ"><Icon><path d="M5.5 1v9M1 5.5h9M4 2.5L5.5 1 7 2.5M4 8.5L5.5 10 7 8.5M2.5 4L1 5.5 2.5 7" stroke="#222" strokeWidth="1.4" /><Pointer x={9} y={5} k={0.75} /></Icon></button>
        <button type="button" aria-label="バックグラウンド処理"><Icon color="#9e9e9e"><circle cx="8" cy="8" r="5" strokeWidth="3" strokeDasharray="2.6 1.33" /></Icon></button>
      </div>
    </footer>
  )
}

export default function App() {
  return (
    <div className="flex h-screen flex-col overflow-hidden bg-white font-['Open_Sans','Noto_Sans_CJK_JP',sans-serif] text-[#222] [font-feature-settings:'palt']">
      <Ribbon />
      <div className="flex min-h-0 flex-1 border-y border-[#d4d4d4]">
        <PropertiesPalette />
        <DrawingView />
        <ProjectBrowser />
      </div>
      <StatusBar />
    </div>
  )
}
